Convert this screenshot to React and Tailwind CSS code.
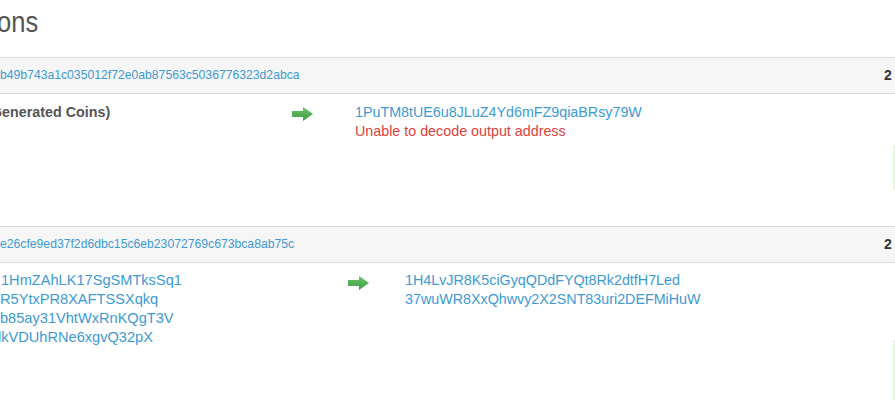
import React from "react";

function Arrow() {
  return (
    <svg width="21" height="14" viewBox="0 0 21 14" className="block">
      <defs>
        <linearGradient id="ag" x1="0" y1="0" x2="0" y2="1">
          <stop offset="0" stopColor="#6cc26c" />
          <stop offset="1" stopColor="#3f9e3f" />
        </linearGradient>
      </defs>
      <path d="M0 4 H11 V0 L21 7 L11 14 V10 H0 Z" fill="url(#ag)" />
    </svg>
  );
}

function Header({ hash }) {
  return (
    <div className="flex h-[37px] items-center border-y border-[#dcdcdc] bg-[#f6f6f6]">
      <span className="text-[12.2px] text-[#3d9ad3] whitespace-nowrap">{hash}</span>
      <span className="ml-auto mr-[3px] w-[8px] shrink-0 overflow-hidden whitespace-nowrap text-[14px] font-bold text-[#333]">
        2013-03
      </span>
    </div>
  );
}

export default function App() {
  return (
    <div
      className="relative h-[400px] w-[895px] overflow-hidden bg-white"
      style={{ fontFamily: '"Liberation Sans", Arial, sans-serif' }}
    >
      <div className="ml-[-3px] pt-[2px] text-[29px] leading-[40px] text-[#555] scale-x-[0.88] origin-left">ons</div>

      <div className="mt-[15px]">
        <Header hash="b49b743a1c035012f72e0ab87563c5036776323d2abca" />
        <div className="flex h-[132px]">
          <div className="w-[292px] shrink-0 pt-[9px]">
            <div className="ml-[-9px] text-[14.3px] font-bold leading-[19px] text-[#555] whitespace-nowrap">
              Generated Coins)
            </div>
          </div>
          <div className="w-[63px] shrink-0 pt-[13px]">
            <Arrow />
          </div>
          <div className="pt-[9px] text-[14.3px] leading-[19px] whitespace-nowrap">
            <div className="text-[#3d9ad3]">1PuTM8tUE6u8JLuZ4Yd6mFZ9qiaBRsy79W</div>
            <div className="text-[#d9413c]">Unable to decode output address</div>
          </div>
          <div className="ml-auto mt-[51px] h-[45px] w-[2px] bg-[#e6f9df]" />
        </div>

        <Header hash="e26cfe9ed37f2d6dbc15c6eb23072769c673bca8ab75c" />
        <div className="flex h-[140px]">
          <div className="w-[348px] shrink-0 pt-[8px] text-[14.6px] leading-[19px] text-[#3d9ad3] whitespace-nowrap">
            <div className="ml-[1px]">1HmZAhLK17SgSMTksSq1</div>
            <div>R5YtxPR8XAFTSSXqkq</div>
            <div>b85ay31VhtWxRnKQgT3V</div>
            <div className="ml-[-2px]">lkVDUhRNe6xgvQ32pX</div>
          </div>
          <div className="w-[57px] shrink-0 pt-[13px]">
            <Arrow />
          </div>
          <div className="pt-[8px] text-[14.3px] leading-[19px] text-[#3d9ad3] whitespace-nowrap">
            <div>1H4LvJR8K5ciGyqQDdFYQt8Rk2dtfH7Led</div>
            <div>37wuWR8XxQhwvy2X2SNT83uri2DEFMiHuW</div>
          </div>
          <div className="ml-auto mt-[77px] h-[63px] w-[2px] bg-[#e6f9df]" />
        </div>
      </div>
    </div>
  );
}
